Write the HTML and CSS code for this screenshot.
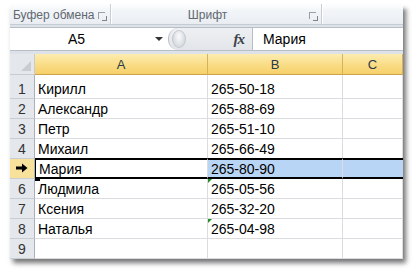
FILE: index.html
```html
<!DOCTYPE html>
<html>
<head>
<meta charset="utf-8">
<link rel="stylesheet" href="styles.css">
</head>
<body>
<div class="win">
  <div class="ribbon">
    <div class="grp grp-clip"><span class="glabel">Буфер обмена</span><span class="launch"></span></div>
    <div class="grp grp-font"><span class="glabel">Шрифт</span><span class="launch"></span></div>
    <div class="grp grp-rest"></div>
  </div>
  <div class="fbar">
    <div class="namebox"><span class="nbtext">A5</span><span class="dd"></span></div>
    <div class="fmid"><span class="knob"></span><span class="fx">fx</span></div>
    <div class="finput">Мария</div>
  </div>
  <div class="sheet">
    <div class="corner"><span class="tri"></span></div>
    <div class="ch">A</div>
    <div class="ch">B</div>
    <div class="ch">C</div>

    <div class="rh r1">1</div><div class="c r1">Кирилл</div><div class="c r1">265-50-18</div><div class="c r1"></div>
    <div class="rh">2</div><div class="c">Александр</div><div class="c">265-88-69</div><div class="c"></div>
    <div class="rh">3</div><div class="c">Петр</div><div class="c">265-51-10</div><div class="c"></div>
    <div class="rh">4</div><div class="c">Михаил</div><div class="c">265-66-49</div><div class="c"></div>
    <div class="rh rh-sel"><svg class="arrow" width="12" height="10" viewBox="0 0 12 10"><path d="M0 3.5h6V0.5l5.5 4.5L6 9.5V6.5H0z" fill="#000"/></svg></div>
    <div class="c sel-a">Мария</div><div class="c sel-b">265-80-90</div><div class="c sel-c"></div>
    <div class="rh">6</div><div class="c">Людмила</div><div class="c err">265-05-56</div><div class="c"></div>
    <div class="rh">7</div><div class="c">Ксения</div><div class="c">265-32-20</div><div class="c"></div>
    <div class="rh">8</div><div class="c">Наталья</div><div class="c err">265-04-98</div><div class="c"></div>
    <div class="rh">9</div><div class="c"></div><div class="c"></div><div class="c"></div>
  </div>
</div>
</body>
</html>
```
FILE: styles.css
```css
html, body {
  margin: 0;
  padding: 0;
  background: #fff;
}
body {
  width: 414px;
  height: 271px;
  overflow: hidden;
  font-family: "Liberation Sans", Arial, sans-serif;
}
.win {
  margin: 4px 0 0 10px;
  width: 393px;
  background: #dde2e8;
  box-shadow: 3px 4px 5px rgba(0, 0, 0, 0.55);
  position: relative;
}
.win::before {
  content: "";
  position: absolute;
  left: -4px;
  right: -8px;
  top: -6px;
  height: 12px;
  background: linear-gradient(to bottom, #fff 40%, rgba(255,255,255,0));
  pointer-events: none;
}
.ribbon {
  display: flex;
  height: 20px;
  background: linear-gradient(to bottom, #f7f9fb, #e9edf2);
  border-bottom: 1px solid #c6ccd4;
}
.grp {
  display: flex;
  align-items: center;
  border-right: 1px solid #c9ced6;
  box-shadow: 1px 0 0 #fff;
  position: relative;
}
.grp-clip {
  width: 101px;
  padding-left: 3px;
  box-sizing: border-box;
}
.grp-font {
  width: 210px;
  justify-content: center;
  padding-right: 18px;
  box-sizing: border-box;
  margin-left: 1px;
}
.grp-rest {
  flex: 1;
  border-right: none;
  box-shadow: none;
}
.glabel {
  font-size: 12px;
  color: #616870;
  line-height: 14px;
  margin-top: 2px;
}
.launch {
  position: absolute;
  right: 5px;
  top: 8px;
  width: 6px;
  height: 6px;
  border-left: 1px solid #9aa0a8;
  border-top: 1px solid #9aa0a8;
}
.launch::after {
  content: "";
  position: absolute;
  right: -2px;
  bottom: -2px;
  width: 4px;
  height: 4px;
  border-right: 1px solid #7d848c;
  border-bottom: 1px solid #7d848c;
}
.fbar {
  display: flex;
  height: 22px;
  margin: 2px 0 3px;
  border-top: 1px solid #b8bec7;
  border-bottom: 1px solid #b8bec7;
  background: #fff;
}
.namebox {
  width: 158px;
  display: flex;
  align-items: center;
  position: relative;
  background: #fff;
}
.nbtext {
  font-size: 14px;
  color: #000;
  margin-left: 58px;
}
.dd {
  position: absolute;
  right: 5px;
  top: 9px;
  border-left: 4px solid transparent;
  border-right: 4px solid transparent;
  border-top: 4px solid #333;
}
.fmid {
  width: 85px;
  display: flex;
  align-items: center;
  justify-content: space-between;
  background: linear-gradient(to bottom, #eef0f3, #e2e5e9);
  border-left: 1px solid #b8bec7;
  border-right: 1px solid #b8bec7;
  border-radius: 10px 0 0 10px;
  padding: 0 8px 0 3px;
  box-sizing: border-box;
}
.knob {
  width: 12px;
  height: 16px;
  border-radius: 50%;
  background: radial-gradient(ellipse at 50% 35%, #fbfbfc, #d7dbe0 70%);
  border: 1px solid #c4c9d0;
}
.fx {
  font-family: "Liberation Serif", "Times New Roman", serif;
  font-style: italic;
  font-weight: bold;
  font-size: 15px;
  color: #3d4249;
  letter-spacing: -1px;
}
.finput {
  flex: 1;
  display: flex;
  align-items: center;
  padding-left: 10px;
  font-size: 14px;
  color: #000;
  background: #fff;
}
.sheet {
  display: grid;
  grid-template-columns: 25px 173px 135px 60px;
  grid-template-rows: 21px 24px repeat(8, 20px);
  background: #fff;
}
.corner {
  background: #e4e7eb;
  border-right: 1px solid #c8ccd2;
  border-bottom: 1px solid #c8ccd2;
  position: relative;
}
.tri {
  position: absolute;
  right: 3px;
  bottom: 3px;
  border-left: 10px solid transparent;
  border-bottom: 10px solid #c9cdd2;
}
.ch {
  background: linear-gradient(to bottom, #fcecb0, #f9dc85 55%, #f6d06a);
  border-right: 1px solid #d7b25c;
  border-bottom: 1px solid #c9a24a;
  display: flex;
  align-items: center;
  justify-content: center;
  font-size: 13px;
  color: #2a3a4a;
}
.rh {
  background: #e4e7eb;
  border-right: 1px solid #aab0b8;
  border-bottom: 1px solid #c9ced4;
  display: flex;
  align-items: flex-end;
  justify-content: center;
  padding-bottom: 1px;
  box-sizing: border-box;
  font-size: 14px;
  color: #333;
}
.rh-sel {
  background: #f8e19a;
  align-items: center;
}
.c {
  border-right: 1px solid #dadcdf;
  border-bottom: 1px solid #dadcdf;
  display: flex;
  align-items: flex-end;
  padding: 0 0 1px 3px;
  box-sizing: border-box;
  font-size: 14px;
  color: #000;
  position: relative;
  white-space: nowrap;
}
.sel-a, .sel-b, .sel-c {
  border-top: 2px solid #000;
  border-bottom: 2px solid #000;
  margin-top: -1px;
  padding-bottom: 0;
}
.sel-a {
  border-left: 1px solid #000;
}
.sel-a::after {
  content: "";
  position: absolute;
  left: -1px;
  bottom: -4px;
  width: 5px;
  height: 4px;
  background: #000;
}
.sel-b, .sel-c {
  background: #b9d5f5;
}
.sel-c {
  border-right: none;
}
.err::before {
  content: "";
  position: absolute;
  left: 0;
  top: 0;
  border-top: 4px solid #1f8f1f;
  border-right: 4px solid transparent;
}
```
